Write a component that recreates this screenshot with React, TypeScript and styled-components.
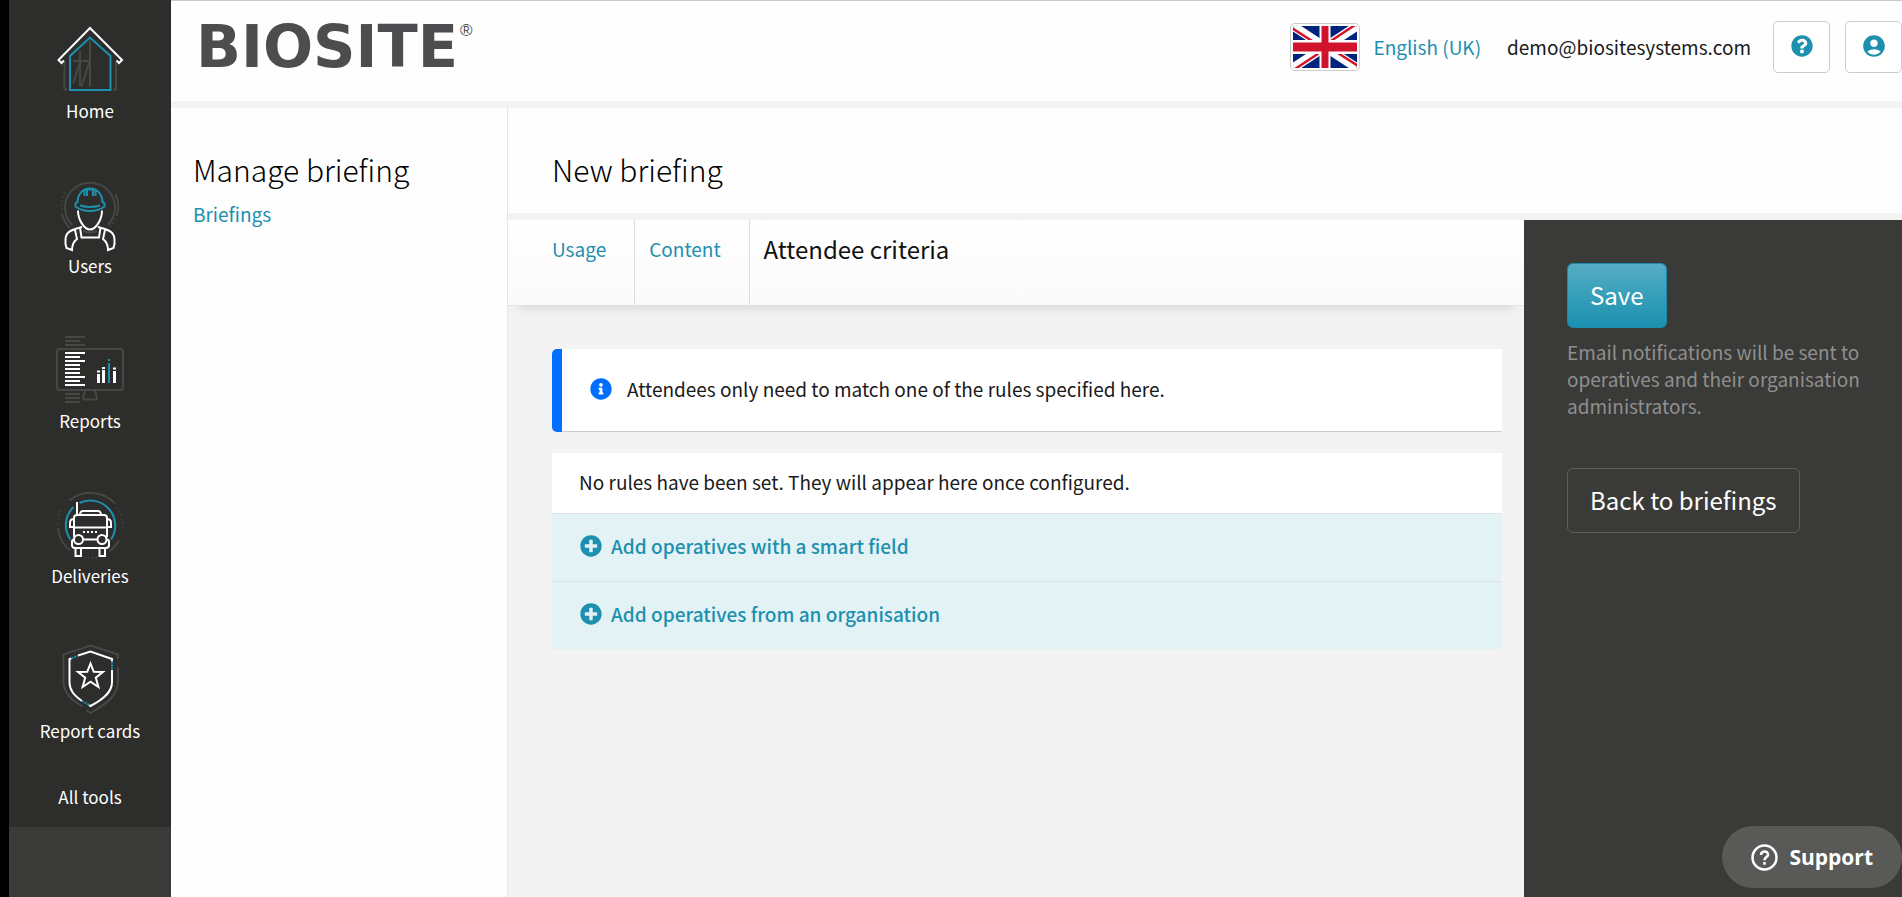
import React from 'react';
import styled, { createGlobalStyle, css } from 'styled-components';
import { FaInfoCircle, FaPlusCircle, FaQuestionCircle } from 'react-icons/fa';
import { MdAccountCircle } from 'react-icons/md';

const color = {
  link: '#1c90ae',
  text: '#1a1a1a',
  band: '#f3f3f3',
  rule: '#dedede',
  dark: '#2d2d2b',
  panel: '#3a3a38',
  info: '#006fff',
  outline: '#474745',
};

const GlobalStyle = createGlobalStyle`
  *, *::before, *::after { box-sizing: border-box; }
  body {
    margin: 0;
    background: ${color.band};
    color: ${color.text};
    font-family: "Noto Sans CJK SC", "Open Sans", sans-serif;
    font-size: 19px;
    line-height: 26px;
  }
  a { color: ${color.link}; text-decoration: none; }
  button { font-family: inherit; cursor: pointer; }
  h1, h2, p, ul { margin: 0; padding: 0; }
`;

const Shell = styled.div`
  display: flex;
  min-height: 100vh;
`;

const Sidebar = styled.nav`
  flex: none;
  width: 171px;
  border-left: 9px solid #000;
  background: ${color.panel};
`;

const NavList = styled.ul`
  list-style: none;
  background: ${color.dark};
`;

const NavLink = styled.a<{ $compact?: boolean }>`
  display: flex;
  flex-direction: column;
  align-items: center;
  gap: 5px;
  padding: ${(p) => (p.$compact ? '10px 0 18px' : '26px 0 32px')};
  color: #fff;
  font-size: 17px;
  line-height: 24px;
`;

const NavIcon = styled.svg`
  width: 68px;
  height: 68px;
  overflow: visible;
  fill: none;
  stroke: #fff;
  stroke-width: 2;
  .grey { stroke: ${color.outline}; }
  .blue { stroke: ${color.link}; }
  .dots { stroke-dasharray: 1 3; }
  .solid { stroke: none; fill: #fff; }
  .solid-blue { stroke: none; fill: ${color.link}; }
`;

const Page = styled.div`
  flex: 1;
  min-width: 0;
  display: flex;
  flex-direction: column;
`;

const Header = styled.header`
  display: flex;
  justify-content: space-between;
  align-items: flex-start;
  height: 108px;
  padding-left: 25px;
  border-top: 1px solid #c8c8c8;
  border-bottom: 7px solid ${color.band};
  background: #fefefe;
`;

const Logo = styled.a`
  display: flex;
  align-items: flex-start;
  gap: 2px;
  padding-top: 16px;
  color: #4d4d4f;
  font: 700 59px/60px "DejaVu Sans", sans-serif;
`;

const Registered = styled.sup`
  padding-top: 6px;
  font: 400 17px/16px "Liberation Sans", sans-serif;
`;

const HeaderTools = styled.div`
  display: flex;
  align-items: center;
  padding-top: 20px;
`;

const Language = styled.a`
  display: flex;
  align-items: center;
  gap: 13px;
  margin-right: 26px;
`;

const Flag = styled.svg`
  width: 70px;
  height: 48px;
  padding: 2px;
  border: 1px solid #ccc;
  border-radius: 5px;
  background: #fff;
`;

const Email = styled.span`
  margin-right: 22px;
`;

const IconButton = styled.button`
  display: flex;
  align-items: center;
  justify-content: center;
  width: 57px;
  height: 52px;
  padding: 0 0 3px;
  border: 1px solid #ccc;
  border-radius: 5px;
  background: #fff;
  color: ${color.link};
  font-size: 22px;
  & + & { margin-left: 15px; font-size: 26px; }
`;

const Columns = styled.div`
  flex: 1;
  display: grid;
  grid-template-columns: 337px minmax(0, 1fr);
`;

const SubNav = styled.aside`
  padding: 41px 22px;
  border-right: 1px solid #e6e6e6;
  background: #fefefe;
`;

const titleText = css`
  font-size: 30px;
  font-weight: 300;
  line-height: 40px;
  color: #000;
`;

const SubNavTitle = styled.h2`
  ${titleText}
  margin-bottom: 12px;
`;

const Main = styled.main`
  display: flex;
  flex-direction: column;
`;

const TitleBar = styled.div`
  padding: 41px 44px 24px;
  border-bottom: 7px solid ${color.band};
  background: #fefefe;
`;

const Title = styled.h1`
  ${titleText}
`;

const Workspace = styled.div`
  flex: 1;
  display: grid;
  grid-template-columns: minmax(0, 1fr) 378px;
`;

const Tabs = styled.div`
  display: flex;
  height: 86px;
  padding-left: 30px;
  border-bottom: 1px solid #dfe3e6;
  background: linear-gradient(#fff, #fafafa);
  box-shadow: 0 12px 10px -10px rgba(0, 0, 0, 0.12);
`;

const Tab = styled.a`
  padding: 12px 28px 0 14px;
  border-right: 1px solid ${color.rule};
  line-height: 34px;
  &[aria-current] {
    border-right: 0;
    color: #111;
    font-size: 24px;
  }
`;

const Content = styled.div`
  display: grid;
  gap: 21px;
  padding: 43px 22px 43px 44px;
`;

const Notice = styled.p`
  display: flex;
  align-items: center;
  gap: 15px;
  height: 83px;
  padding: 0 28px 4px;
  border-left: 10px solid ${color.info};
  border-radius: 5px 0 0 5px;
  background: #fff;
  box-shadow: inset 0 -1px #ccc;
`;

const NoticeIcon = styled(FaInfoCircle)`
  width: 22px;
  height: 22px;
  color: ${color.info};
`;

const Rules = styled.div`
  background: #fff;
`;

const EmptyRules = styled.p`
  padding: 16px 27px 18px;
`;

const AddRule = styled.button`
  display: flex;
  align-items: center;
  gap: 9px;
  width: 100%;
  padding: 19px 28px 22px;
  border: 0;
  border-top: 1px solid #d9e4e6;
  background: #e3f2f5;
  color: ${color.link};
  font-size: 19px;
  font-weight: 500;
  line-height: 26px;
`;

const AddIcon = styled(FaPlusCircle)`
  width: 22px;
  height: 22px;
`;

const Actions = styled.aside`
  display: flex;
  flex-direction: column;
  align-items: flex-start;
  padding: 43px 20px 43px 43px;
  background: ${color.panel};
`;

const Button = styled.button<{ $primary?: boolean }>`
  height: 65px;
  padding: 0 22px 2px;
  border: 1px solid ${(p) => (p.$primary ? '#1c8aa8' : '#5d5d5b')};
  border-radius: 6px;
  background: ${(p) => (p.$primary ? 'linear-gradient(#55adc4, #1a91b0)' : 'transparent')};
  color: #fff;
  font-size: 24px;
  line-height: 32px;
`;

const Hint = styled.p`
  margin: 10px 0 49px;
  color: #8f8f8e;
  line-height: 27px;
`;

const Support = styled.button`
  position: fixed;
  right: 0;
  bottom: 9px;
  display: flex;
  align-items: center;
  gap: 11px;
  height: 62px;
  padding: 0 29px;
  border: 0;
  border-radius: 31px;
  background: #595957;
  color: #fff;
  span { font: 700 21px/30px "Open Sans", "Noto Sans", sans-serif; }
`;

const HomeIcon = () => (
  <NavIcon viewBox="0 0 68 68" aria-hidden="true">
    <path className="grey" d="M8.5 36v27.500h3M60 36v27.500h-3M34 14.500v46M17 35h17M24 25v35M17.500 57l6-20M25.500 60l8-24" />
    <path className="blue" d="M14 64V30L34 11.500 54.500 30v34z" />
    <path d="M8 34.500l-2.500 2.500L2.500 34 34 2l32 32-3 3-2.500-2.500" />
  </NavIcon>
);

const UsersIcon = () => (
  <NavIcon viewBox="0 0 68 68" aria-hidden="true">
    <path className="grey" d="M16 44a25 25 0 1 1 36 0M27 50q7 3 14 0M6 33q2 8 7.500 14M59.500 13a29 29 0 0 1 1 22" />
    <path className="grey dots" d="M9 12a30 30 0 0 0-3 17M59 38a29 29 0 0 1-6 9" />
    <path className="blue" d="M21.500 22C21.500 13 27 7.500 34 7.500S46.500 13 46.500 22M21.500 20.500l-2 2v3c8 6 21 6 29 0v-3l-2-2M24 24.500q10 3 20 0M31 15V8.500h6V15M28.500 15V9M39.500 15V9" />
    <path d="M22 29.500c0 9 6 19 12 19s12-10 12-19M24 46.500l1.500 10h17.500l1.500-10M26 46c-10 3-16 4-16.500 12v5l1 4 5.500 2c0-5 1-8 5-11l-2-9M42 46c10 3 16 4 16.500 12v5l-1 4-5.500 2c0-5-1-8-5-11l2-9" />
  </NavIcon>
);

const ReportsIcon = () => (
  <NavIcon viewBox="0 0 68 68" aria-hidden="true">
    <rect className="grey" x="1" y="13" width="66" height="41" rx="3" />
    <path className="grey" d="M29 55l-2 7q0 1.500 1.500 1.500h11q1.500 0 1.500-1.500l-2-7M9 1h20M9 5h15M9 9h20M9 58h15M9 62h15M9 66h15" />
    <path d="M9 17h20M9 21h15M9 25h20M9 29h15M9 33h15M9 37h15M9 41h20M9 45h15M9 49h20" />
    <path className="solid" d="M41 38h3v9h-3zM41 34.500h3v2h-3zM46 34h3v13h-3zM46 31h3v2h-3zM57 35h3v12h-3zM57 31.500h3v2h-3z" />
    <path className="solid-blue" d="M52 27h2v20h-2zM52 23h2v2h-2z" />
  </NavIcon>
);

const DeliveriesIcon = () => (
  <NavIcon viewBox="0 0 68 68" aria-hidden="true">
    <path className="grey" d="M13.500 9.500a33 33 0 0 1 45.500 3M2 37.500a33 33 0 0 0 12 22M63 49.500a33 33 0 0 1-9.500 11" />
    <path className="grey dots" d="M61.500 16.500a33 33 0 0 1 5 21M5 20a33 33 0 0 0-3 14M28 66.500q6 1 13 0" />
    <path className="blue" d="M14.500 48.500a25 25 0 0 1 3-32.500M23.500 12A25 25 0 0 1 55 48.500" />
    <path d="M21 11v12M24 23q.5-3 3-3h15q2.500 0 3 3M18 46V27q0-3 3-3h27q3 0 3 3v19M18 36.500h33M18 28q-4 0-4 4v4h3M51 28q4 0 4 4v4h-3M27 48.500h14M18 48l-2 2v4q0 3 3 3h31q3 0 3-3v-4l-2-2M19.500 58v7H25v-7M43.500 58v7H49v-7" />
    <path strokeDasharray="2 2" d="M27 41h15" />
    <circle cx="22.500" cy="48.500" r="4.500" />
    <circle cx="46" cy="48.500" r="4.500" />
  </NavIcon>
);

const ReportCardsIcon = () => (
  <NavIcon viewBox="0 0 68 68" aria-hidden="true">
    <path className="grey" d="M26.500 60.500C14 53 7.500 46 7.500 35V8.500L34.500-.5 62 8.500V13M62 21v14c0 13-8 21-27.500 32l-4-3" />
    <path d="M22 9.500l12.500-4L56 13v2.500M56 24v12c0 10-8 17-21.500 24l-1.500-1M26 55C17.500 49 13.500 44 13.500 36V13l2-.5" />
    <path className="blue" strokeDasharray="2 1" d="M15.500 12.300l6.500-2.500M56 15.500V24M26 55l7 4" />
    <path d="M34.500 17.500l3.200 8.200 9.300.3-7.200 5.700 2.600 9.300-7.900-5.300-7.900 5.300 2.600-9.300L22 26l9.300-.3z" />
  </NavIcon>
);

const UnionFlag = () => (
  <Flag viewBox="0 0 64 42" preserveAspectRatio="none" aria-hidden="true">
    <path fill="#00247d" d="M0 0h64v42H0z" />
    <path stroke="#fff" strokeWidth="9" d="M0 0l64 42M64 0L0 42" />
    <path stroke="#cf142b" strokeWidth="2.500" d="M-1 2l31 20M65 40L34 20M62-1L31 19.500M2 43l31-20.500" />
    <path fill="#fff" d="M26.500 0h11v42h-11zM0 14h64v14H0z" />
    <path fill="#cf142b" d="M28.500 0h7v42h-7zM0 16.500h64v9H0z" />
  </Flag>
);

const navItems = [
  { label: 'Home', Icon: HomeIcon },
  { label: 'Users', Icon: UsersIcon },
  { label: 'Reports', Icon: ReportsIcon },
  { label: 'Deliveries', Icon: DeliveriesIcon },
  { label: 'Report cards', Icon: ReportCardsIcon },
];

export default function App() {
  return (
    <>
      <GlobalStyle />
      <Shell>
        <Sidebar>
          <NavList>
            {navItems.map(({ label, Icon }) => (
              <li key={label}>
                <NavLink href="#">
                  <Icon />
                  {label}
                </NavLink>
              </li>
            ))}
            <li>
              <NavLink href="#" $compact>
                All tools
              </NavLink>
            </li>
          </NavList>
        </Sidebar>
        <Page>
          <Header>
            <Logo href="#">
              BIOSITE
              <Registered>®</Registered>
            </Logo>
            <HeaderTools>
              <Language href="#">
                <UnionFlag />
                English (UK)
              </Language>
              <Email>demo@biositesystems.com</Email>
              <IconButton aria-label="Help">
                <FaQuestionCircle />
              </IconButton>
              <IconButton aria-label="Account">
                <MdAccountCircle />
              </IconButton>
            </HeaderTools>
          </Header>
          <Columns>
            <SubNav>
              <SubNavTitle>Manage briefing</SubNavTitle>
              <a href="#">Briefings</a>
            </SubNav>
            <Main>
              <TitleBar>
                <Title>New briefing</Title>
              </TitleBar>
              <Workspace>
                <div>
                  <Tabs>
                    <Tab href="#">Usage</Tab>
                    <Tab href="#">Content</Tab>
                    <Tab href="#" aria-current="page">
                      Attendee criteria
                    </Tab>
                  </Tabs>
                  <Content>
                    <Notice>
                      <NoticeIcon />
                      Attendees only need to match one of the rules specified here.
                    </Notice>
                    <Rules>
                      <EmptyRules>No rules have been set. They will appear here once configured.</EmptyRules>
                      <AddRule>
                        <AddIcon />
                        Add operatives with a smart field
                      </AddRule>
                      <AddRule>
                        <AddIcon />
                        Add operatives from an organisation
                      </AddRule>
                    </Rules>
                  </Content>
                </div>
                <Actions>
                  <Button $primary>Save</Button>
                  <Hint>Email notifications will be sent to operatives and their organisation administrators.</Hint>
                  <Button>Back to briefings</Button>
                </Actions>
              </Workspace>
            </Main>
          </Columns>
        </Page>
      </Shell>
      <Support>
        <svg width="27" height="27" viewBox="0 0 27 27" fill="none" stroke="#fff" strokeWidth="2.500" aria-hidden="true">
          <circle cx="13.500" cy="13.500" r="12" />
          <path d="M10 11c0-5 7.500-4.500 7 0-.3 2.200-3.500 2.200-3.500 5.200M13.500 18v2.800" />
        </svg>
        <span>Support</span>
      </Support>
    </>
  );
}
